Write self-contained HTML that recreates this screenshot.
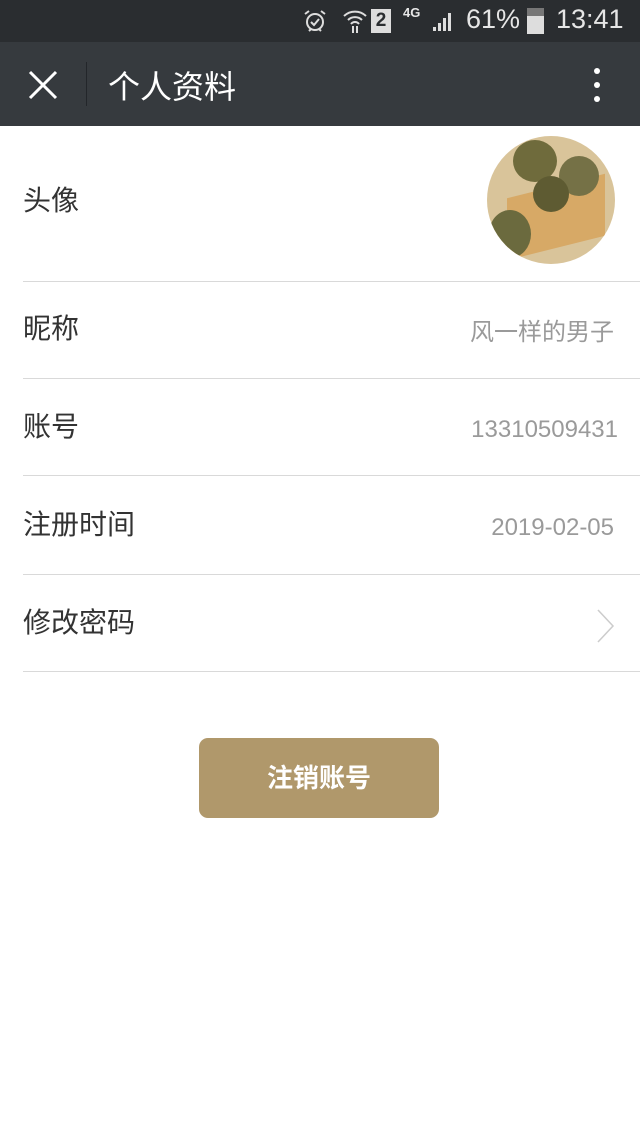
<!DOCTYPE html>
<html><head><meta charset="utf-8"><style>
*{margin:0;padding:0;box-sizing:border-box}
body{width:640px;height:1136px;background:#fff;position:relative;overflow:hidden;font-family:"Liberation Sans","Noto Sans CJK SC",sans-serif}
.sb{position:absolute;left:0;top:0;width:640px;height:42px;background:#2a2d30;color:#e6e6e6}
.nav{position:absolute;left:0;top:42px;width:640px;height:84px;background:#363a3e;color:#fff}
.lbl{position:absolute;left:23px;font-size:28px;color:#333;line-height:30px}
.val{position:absolute;right:26px;font-size:24px;color:#9a9a9a;line-height:30px}
.ln{position:absolute;left:23px;right:0;height:1px;background:#d9d9d9}
</style></head><body>
<div class="sb">
<svg style="position:absolute;left:302px;top:8px" width="26" height="26" viewBox="0 0 26 26" fill="none" stroke="#ddd" stroke-width="2"><circle cx="13" cy="14" r="8"/><path d="M9 14l3 3 5-6M3 6l4-3M23 6l-4-3M7 23l2-2M19 23l-2-2"/></svg>
<svg style="position:absolute;left:342px;top:8px" width="26" height="26" viewBox="0 0 26 26" fill="none" stroke="#ddd" stroke-width="2"><path d="M2 8a16 16 0 0 1 22 0M6 12a10 10 0 0 1 14 0M9 16a5 5 0 0 1 8 0M11 18v7M15 18v7"/></svg>
<div style="position:absolute;left:371px;top:9px;width:20px;height:24px;background:#ddd;color:#2a2d30;font-size:19px;font-weight:bold;text-align:center;line-height:24px">2</div>
<div style="position:absolute;left:403px;top:5px;font-size:13px;font-weight:bold">4G</div>
<svg style="position:absolute;left:432px;top:10px" width="22" height="22" viewBox="0 0 22 22" fill="#ddd"><rect x="1" y="17" width="3" height="4"/><rect x="6" y="13" width="3" height="8"/><rect x="11" y="8" width="3" height="13"/><rect x="16" y="3" width="3" height="18"/></svg>
<div style="position:absolute;left:466px;top:4px;font-size:27px">61%</div>
<div style="position:absolute;left:527px;top:8px;width:17px;height:26px;background:#ddd"><div style="height:8px;background:#777"></div></div>
<div style="position:absolute;left:556px;top:4px;font-size:27px">13:41</div>
</div>
<div class="nav">
<svg style="position:absolute;left:28px;top:28px" width="30" height="30" viewBox="0 0 30 30" stroke="#fff" stroke-width="3"><path d="M2 2L28 28M28 2L2 28"/></svg>
<div style="position:absolute;left:86px;top:20px;width:1px;height:44px;background:#23262a"></div>
<div style="position:absolute;left:108px;top:26px;font-size:32px;line-height:38px">个人资料</div>
<div style="position:absolute;left:594px;top:26px;width:6px;height:6px;border-radius:3px;background:#fff"></div>
<div style="position:absolute;left:594px;top:40px;width:6px;height:6px;border-radius:3px;background:#fff"></div>
<div style="position:absolute;left:594px;top:54px;width:6px;height:6px;border-radius:3px;background:#fff"></div>
</div>
<div class="lbl" style="top:186px">头像</div>
<div style="position:absolute;left:487px;top:136px;width:128px;height:128px;border-radius:50%;overflow:hidden;background:#d9c49a">
<div style="position:absolute;left:20px;top:50px;width:98px;height:62px;background:#d7a966;transform:skewY(-14deg)"></div>
<div style="position:absolute;left:26px;top:4px;width:44px;height:42px;border-radius:50%;background:#6f6b3c"></div>
<div style="position:absolute;left:72px;top:20px;width:40px;height:40px;border-radius:50%;background:#757146"></div>
<div style="position:absolute;left:46px;top:40px;width:36px;height:36px;border-radius:50%;background:#5e5b32"></div>
<div style="position:absolute;left:2px;top:74px;width:42px;height:48px;border-radius:50%;background:#6b6a3e"></div>
</div>
<div class="ln" style="top:281px"></div>
<div class="lbl" style="top:314px">昵称</div><div class="val" style="top:318px">风一样的男子</div>
<div class="ln" style="top:378px"></div>
<div class="lbl" style="top:412px">账号</div><div class="val" style="top:415px;right:22px">13310509431</div>
<div class="ln" style="top:475px"></div>
<div class="lbl" style="top:510px">注册时间</div><div class="val" style="top:513px">2019-02-05</div>
<div class="ln" style="top:574px"></div>
<div class="lbl" style="top:608px">修改密码</div>
<svg style="position:absolute;left:596px;top:608px" width="20" height="36" viewBox="0 0 20 36" fill="none" stroke="#ccc" stroke-width="1.5"><path d="M2 2L17 18L2 34"/></svg>
<div class="ln" style="top:671px"></div>
<div style="position:absolute;left:199px;top:738px;width:240px;height:80px;border-radius:9px;background:#b0986b;color:#fff;font-size:26px;font-weight:bold;text-align:center;line-height:80px">注销账号</div>
</body></html>
